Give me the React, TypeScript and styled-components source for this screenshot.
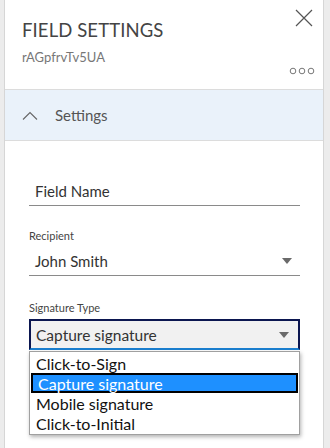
import React from "react";
import styled, { createGlobalStyle } from "styled-components";

const Global = createGlobalStyle`
  html, body {
    margin: 0;
    padding: 0;
    background: #ececec;
    font-family: Lato, "Open Sans", sans-serif;
  }
`;

const Shell = styled.div`
  width: 330px;
  height: 448px;
  display: flex;
  background: #ececec;
  overflow: hidden;
`;

const Panel = styled.div`
  margin-left: 4px;
  width: 318px;
  border-left: 1px solid #d6d6d6;
  border-right: 1px solid #d6d6d6;
  background: #fff;
  display: flex;
  flex-direction: column;
`;

const Header = styled.div`
  position: relative;
  height: 90px;
  padding: 19px 0 0 17px;
  box-sizing: border-box;
  border-bottom: 1px solid #dcdcdc;
`;

const Title = styled.div`
  font-size: 18.5px;
  color: #444;
  letter-spacing: 0.1px;
  line-height: 22px;
`;

const Sub = styled.div`
  margin-top: 8px;
  font-size: 13px;
  color: #777;
  line-height: 16px;
`;

const Close = styled.svg`
  position: absolute;
  top: 9px;
  right: 10px;
`;

const Dots = styled.svg`
  position: absolute;
  top: 67px;
  right: 8px;
`;

const Section = styled.div`
  height: 50px;
  display: flex;
  align-items: center;
  padding-left: 17px;
  gap: 17px;
  background: #eaf2fa;
  border-bottom: 1px solid #dcdcdc;
  font-size: 15px;
  color: #555;
`;

const Body = styled.div`
  padding: 36px 23px 0 24px;
  display: flex;
  flex-direction: column;
`;

const Field = styled.div<{ gap: number }>`
  margin-bottom: ${(p) => p.gap}px;
  display: flex;
  flex-direction: column;
`;

const Label = styled.div`
  font-size: 11px;
  color: #444;
  line-height: 14px;
  margin-bottom: 4px;
`;

const Line = styled.div`
  height: 28px;
  display: flex;
  align-items: center;
  justify-content: space-between;
  padding: 0 8px 0 6px;
  border-bottom: 1px solid #8a8a8a;
  font-size: 15px;
  color: #333;
`;

const Select = styled.div`
  display: flex;
  align-items: center;
  justify-content: space-between;
  padding: 0 9px 0 5px;
  background: #f1f1f1;
  border: 2px solid #0b1650;
  border-bottom: 2px solid #1b7fcf;
  font-size: 15.5px;
  color: #333;
  box-sizing: border-box;
  height: 31px;
`;

const Arrow = () => (
  <svg width="10" height="6" viewBox="0 0 10 6">
    <path d="M0 0h10L5 6z" fill="#6a6a6a" />
  </svg>
);

const List = styled.div`
  margin-top: 1px;
  border: 1px solid #a0a0a0;
  background: #fff;
  box-shadow: 1px 2px 4px rgba(0, 0, 0, 0.3);
  padding: 1px 0;
`;

const Option = styled.div<{ active?: boolean }>`
  height: 20px;
  line-height: 18px;
  font-size: 16px;
  padding-left: 5px;
  color: ${(p) => (p.active ? "#fff" : "#111")};
  background: ${(p) => (p.active ? "#1e90ff" : "transparent")};
  border: 2px solid ${(p) => (p.active ? "#000" : "transparent")};
  border-left-width: ${(p) => (p.active ? 2 : 0)}px;
  box-sizing: border-box;
  margin: 0 1px;
`;

const options = ["Click-to-Sign", "Capture signature", "Mobile signature", "Click-to-Initial"];

export default function App() {
  return (
    <Shell>
      <Global />
      <Panel>
        <Header>
          <Title>FIELD SETTINGS</Title>
          <Sub>rAGpfrvTv5UA</Sub>
          <Close width="18" height="18" viewBox="0 0 18 18">
            <path d="M1 1l16 16M17 1L1 17" stroke="#555" strokeWidth="1.2" />
          </Close>
          <Dots width="26" height="8" viewBox="0 0 26 8">
            {[4, 13, 22].map((x) => (
              <circle key={x} cx={x} cy="4" r="2.8" fill="none" stroke="#777" strokeWidth="1" />
            ))}
          </Dots>
        </Header>
        <Section>
          <svg width="16" height="9" viewBox="0 0 16 9">
            <path d="M1 8.5L8 1.5l7 7" fill="none" stroke="#666" strokeWidth="1.1" />
          </svg>
          Settings
        </Section>
        <Body>
          <Field gap={23}>
            <Line>Field Name</Line>
          </Field>
          <Field gap={25}>
            <Label>Recipient</Label>
            <Line>
              John Smith
              <Arrow />
            </Line>
          </Field>
          <Field gap={0}>
            <Label>Signature Type</Label>
            <Select>
              Capture signature
              <Arrow />
            </Select>
            <List>
              {options.map((o) => (
                <Option key={o} active={o === "Capture signature"}>
                  {o}
                </Option>
              ))}
            </List>
          </Field>
        </Body>
      </Panel>
    </Shell>
  );
}
